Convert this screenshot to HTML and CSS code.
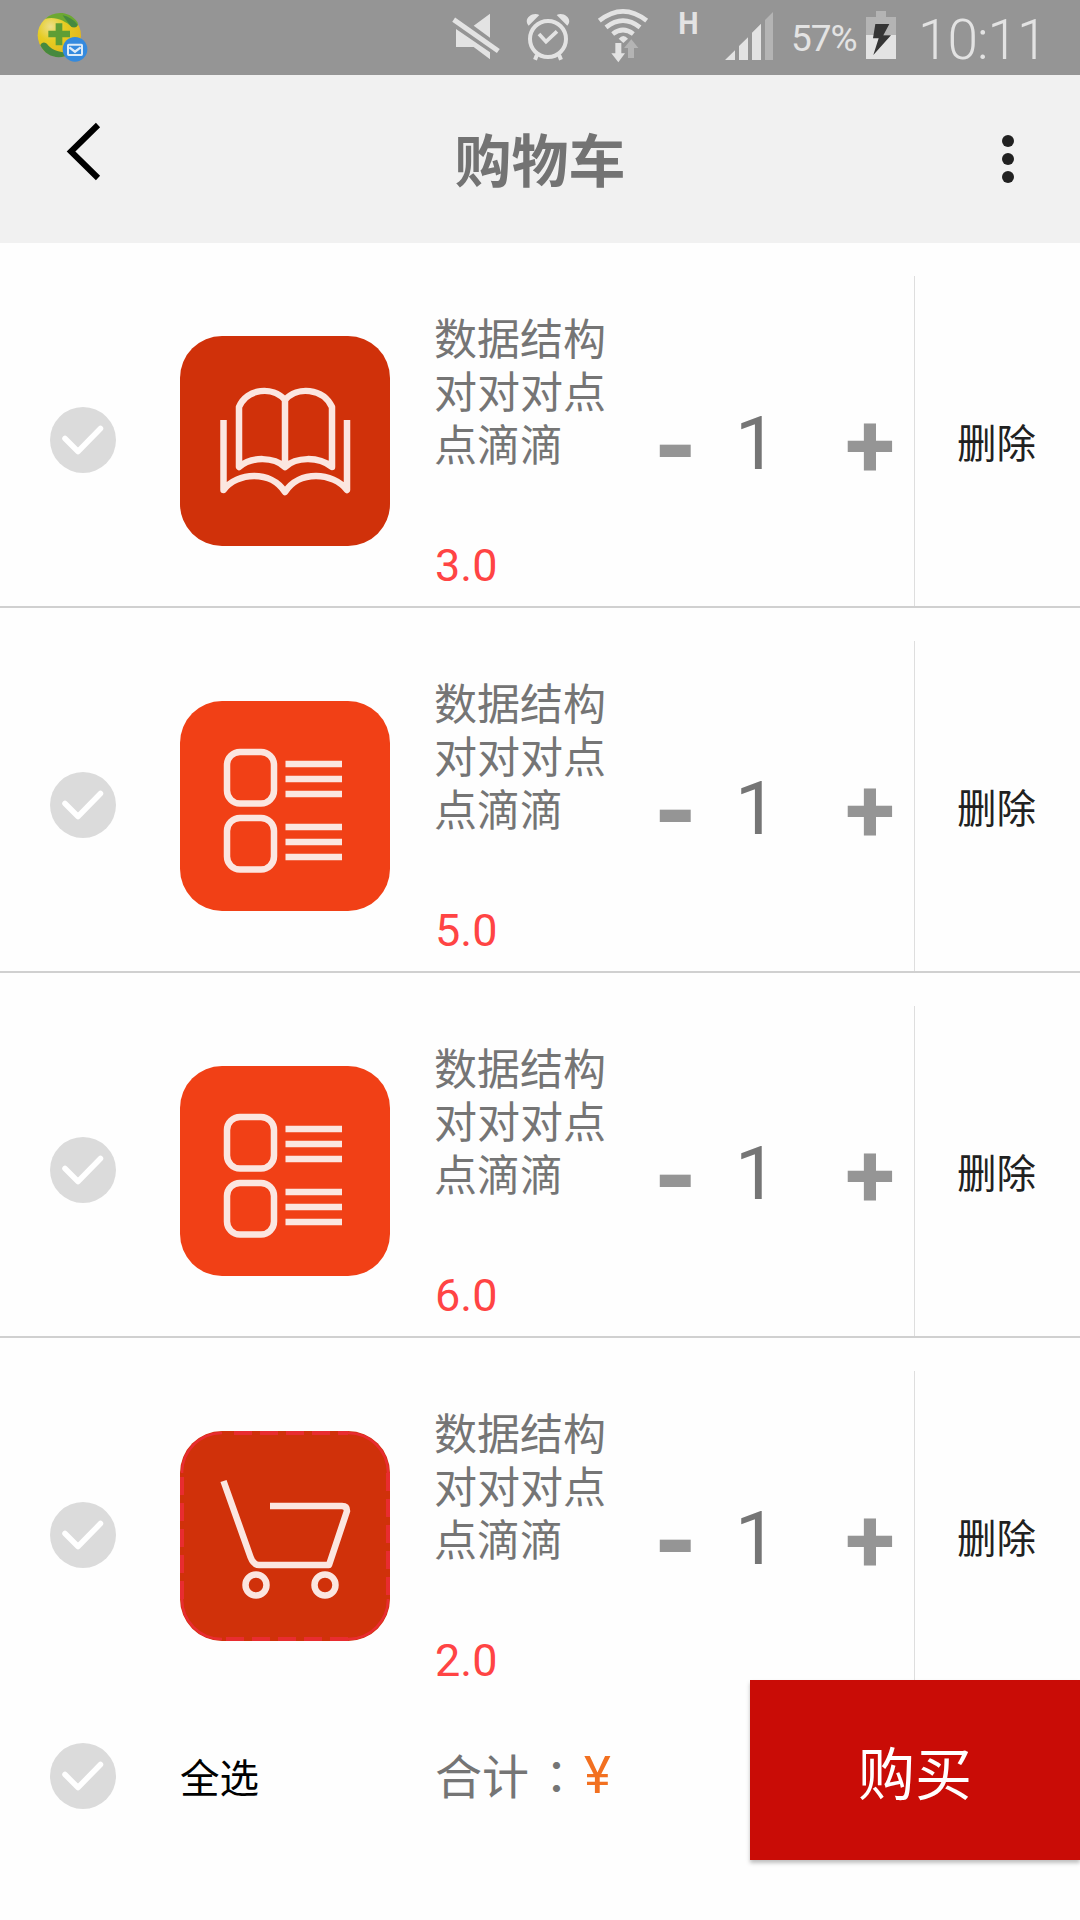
FILE: index.html
```html
<!DOCTYPE html>
<html lang="zh-CN">
<head>
<meta charset="UTF-8">
<meta name="viewport" content="width=device-width, initial-scale=1.0">
<title>购物车</title>
<link rel="stylesheet" href="styles.css">
</head>

<body>
    <svg class="defs">
        <defs>
            <symbol id="check" viewBox="0 0 68 68">
                <circle cx="34" cy="34" r="33" fill="#dbdbdb"/>
                <path d="M16 32.500 L29 45.500 L51.500 22.500" fill="none" stroke="#fff" stroke-width="5.500" stroke-linecap="round" stroke-linejoin="round"/>
            </symbol>
            <symbol id="book" viewBox="0 0 210 210">
                <rect width="210" height="210" rx="42" fill="#d0310a"/>
                <g class="line">
                    <path d="M43.500 84 V154 C57 136 91 134 105 156 C119 134 153 136 167 154 V84"/>
                    <path d="M59 131 V71 C67 52 93 50 105 64 C117 50 143 52 152 71 V131 C138 120 116 121 105 131 C94 121 72 120 59 131 Z M105 64 V131"/>
                </g>
            </symbol>
            <symbol id="list" viewBox="0 0 210 210">
                <rect width="210" height="210" rx="42" fill="#f14016"/>
                <g class="line">
                    <rect x="47" y="51" width="47" height="51.500" rx="13"/>
                    <rect x="47" y="117" width="47" height="51.500" rx="13"/>
                    <path d="M105.500 63 H162 M105.500 78 H162 M105.500 93 H162 M105.500 126 H162 M105.500 141 H162 M105.500 156 H162"/>
                </g>
            </symbol>
            <symbol id="cart" viewBox="0 0 210 210">
                <rect width="210" height="210" rx="42" fill="#d0310a"/>
                <path d="M54 2 H168 M208 42 V168 M168 208 H42 M2 168 V42" fill="none" stroke="#e82c30" stroke-width="4" stroke-dasharray="18 8"/>
                <path d="M2 42 A40 40 0 0 1 42 2 M168 2 A40 40 0 0 1 208 42 M208 168 A40 40 0 0 1 168 208 M42 208 A40 40 0 0 1 2 168" fill="none" stroke="#e82c30" stroke-width="2.500"/>
                <g class="line">
                    <path d="M43.500 50 L70.500 126 Q73.500 134 79 134 H149 L167 80 Q167 75 162 75 H90"/>
                    <circle cx="76" cy="154" r="10.500"/>
                    <circle cx="145" cy="154" r="10.500"/>
                </g>
            </symbol>
        </defs>
    </svg>

    <div class="status">
        <svg class="app-icon" viewBox="108 0 156 225">
            <defs>
                <radialGradient id="ball" cx="0.3" cy="0.3" r="0.8">
                    <stop offset="0" stop-color="#eddf8a"/>
                    <stop offset="0.4" stop-color="#e6cc22"/>
                    <stop offset="1" stop-color="#e2b41c"/>
                </radialGradient>
            </defs>
            <circle cx="178" cy="106" r="65" fill="url(#ball)"/>
            <path d="M136 56 C160 34 206 30 232 66 C238 78 226 86 214 80 C196 62 166 48 136 56 Z" fill="#6ca832"/>
            <path d="M188 46 C206 50 222 60 233 74 C230 84 220 82 214 80 C206 70 196 58 188 46 Z" fill="#46893f"/>
            <path d="M121 136 C126 124 138 126 144 136 C158 152 182 158 214 160 C180 182 138 172 121 136 Z" fill="#46893f"/>
            <path d="M167 70 H187 V92 H210 V112 H187 V136 H167 V112 H145 V92 H167 Z" fill="#5e9e35"/>
            <circle cx="225" cy="148" r="37" fill="#348ade"/>
            <rect x="204" y="134" width="42" height="31" rx="2" fill="none" stroke="#dcebf7" stroke-width="6"/>
            <path d="M208 142 L225 155 L242 142" fill="none" stroke="#dcebf7" stroke-width="7"/>
        </svg>
        <svg class="mute" viewBox="36 0 144 225">
            <path d="M150 41 V113 L101 77 Z M48 87 L150 157 V178 L101 141 H48 Z" fill="#e3e3e3"/>
            <path d="M41 59 L175 153" stroke="#e3e3e3" stroke-width="15"/>
        </svg>
        <svg class="alarm" viewBox="255 0 138 225">
            <circle cx="324" cy="117" r="54" fill="none" stroke="#e3e3e3" stroke-width="12"/>
            <path d="M297 102 L318 125 L351 94" fill="none" stroke="#e3e3e3" stroke-width="11"/>
            <path d="M266 77 C248 58 276 34 298 45 Z M382 77 C400 58 372 34 350 45 Z" fill="#e3e3e3"/>
            <path d="M291 164 L285 179 M357 164 L363 179" stroke="#e3e3e3" stroke-width="12"/>
        </svg>
        <svg class="wifi" viewBox="471 0 156 225">
            <g fill="none" stroke="#e3e3e3" stroke-width="14">
                <path d="M478 62 Q549 6 620 62"/>
                <path d="M498 82 Q549 42 600 82"/>
                <path d="M518 102 Q549 78 580 102"/>
            </g>
            <path d="M536 116 Q550 100 564 116 L550 129 Z" fill="#e3e3e3"/>
            <path d="M526 129 H544 V160 H555 L535 187 L514 160 H526 Z" fill="#e3e3e3"/>
            <path d="M564 174 V144 H552 L574 118 L595 144 H582 V174 Z" fill="#b4b4b4"/>
        </svg>
        <span class="network">H</span>
        <svg class="signal" viewBox="855 0 144 225">
            <path d="M855 180 L885 151 V180 Z M897 180 V138 L924 112 V180 Z M936 180 V98 L963 71 V180 Z" fill="#e3e3e3"/>
            <path d="M975 180 V60 L999 36 V180 Z" fill="#b4b4b4"/>
        </svg>
        <span class="percent">57%</span>
        <svg class="battery" viewBox="318 0 90 225">
            <path d="M318 51 H348 V33 H378 V51 H408 V177 H318 Z" fill="#b4b4b4"/>
            <path d="M318 105 H408 V177 H318 Z" fill="#e3e3e3"/>
            <path d="M346 72 H388 L370 106 H393 L340 165 L356 115 H339 Z" fill="#353535"/>
        </svg>
        <span class="time">10:11</span>
    </div>

    <div class="header">
        <svg class="back" viewBox="0 0 36 62">
            <path d="M32 4 L5 30.500 L32 57" fill="none" stroke="#000" stroke-width="6"/>
        </svg>
        <h1>购物车</h1>
        <svg class="more" viewBox="0 0 12 48">
            <circle cx="6" cy="6" r="6"/>
            <circle cx="6" cy="24" r="6"/>
            <circle cx="6" cy="42" r="6"/>
        </svg>
    </div>

    <div class="list">
        <div class="item">
            <svg class="check"><use href="#check"/></svg>
            <svg class="pic"><use href="#book"/></svg>
            <div class="info">
                <p class="name">数据结构对对对点点滴滴</p>
                <p class="price">3.0</p>
            </div>
            <span class="minus">-</span>
            <span class="num">1</span>
            <span class="plus">+</span>
            <span class="delete">删除</span>
        </div>
        <div class="item">
            <svg class="check"><use href="#check"/></svg>
            <svg class="pic"><use href="#list"/></svg>
            <div class="info">
                <p class="name">数据结构对对对点点滴滴</p>
                <p class="price">5.0</p>
            </div>
            <span class="minus">-</span>
            <span class="num">1</span>
            <span class="plus">+</span>
            <span class="delete">删除</span>
        </div>
        <div class="item">
            <svg class="check"><use href="#check"/></svg>
            <svg class="pic"><use href="#list"/></svg>
            <div class="info">
                <p class="name">数据结构对对对点点滴滴</p>
                <p class="price">6.0</p>
            </div>
            <span class="minus">-</span>
            <span class="num">1</span>
            <span class="plus">+</span>
            <span class="delete">删除</span>
        </div>
        <div class="item">
            <svg class="check"><use href="#check"/></svg>
            <svg class="pic"><use href="#cart"/></svg>
            <div class="info">
                <p class="name">数据结构对对对点点滴滴</p>
                <p class="price">2.0</p>
            </div>
            <span class="minus">-</span>
            <span class="num">1</span>
            <span class="plus">+</span>
            <span class="delete">删除</span>
        </div>
    </div>

    <div class="footer">
        <svg class="check"><use href="#check"/></svg>
        <span class="all">全选</span>
        <span class="total">合计<span class="colon" lang="zh-TW">：</span></span>
        <span class="yen">¥</span>
        <div class="buy">购买</div>
    </div>
</body>
</html>
```

FILE: styles.css
```css
* {
    box-sizing: border-box;
}
body {
    margin: 0;
    width: 1080px;
    height: 1920px;
    overflow: hidden;
    background-color: #fefefe;
    font-family: Roboto, "Noto Sans CJK SC", sans-serif;
    color: #757575;
}
h1, p {
    margin: 0;
}
svg {
    display: block;
    flex: none;
}
.defs {
    display: none;
}
.line {
    fill: none;
    stroke: #fbe6e0;
    stroke-width: 6.5;
    stroke-linejoin: round;
}

/* status bar */
.status {
    display: flex;
    height: 75px;
    padding-left: 36px;
    background-color: #959595;
    color: #e3e3e3;
    line-height: 75px;
}
.status svg {
    height: 75px;
}
.app-icon {
    width: 52px;
}
.mute {
    width: 48px;
    margin-left: 364px;
}
.alarm {
    width: 46px;
    margin-left: 25px;
}
.wifi {
    width: 52px;
    margin-left: 26px;
}
.network {
    width: 24px;
    margin-left: 28px;
    font-size: 32px;
    font-weight: bold;
    line-height: 46px;
    transform: scaleX(0.9);
}
.signal {
    width: 48px;
    margin-left: 24px;
}
.percent {
    width: 75px;
    margin-left: 18px;
    padding-top: 1px;
    font-size: 37px;
    letter-spacing: -1px;
}
.battery {
    width: 30px;
}
.time {
    margin-left: 22px;
    padding-top: 3px;
    font-size: 55px;
    font-weight: 300;
    letter-spacing: -1px;
}

/* title bar */
.header {
    display: flex;
    justify-content: space-between;
    height: 168px;
    padding: 0 66px;
    background-color: #f1f1f1;
}
.header h1 {
    font-size: 57px;
    font-weight: bold;
    line-height: 175px;
    color: #737373;
}
.back {
    width: 36px;
    height: 62px;
    margin-top: 46px;
}
.more {
    width: 12px;
    height: 48px;
    margin-top: 60px;
    margin-left: 24px;
    fill: #212121;
}

/* cart items */
.item {
    display: flex;
    height: 365px;
    border-bottom: 2px solid #d0d0d0;
}
/* the last one runs into the bottom bar */
.item:last-child {
    height: 342px;
    border-bottom: none;
}
.check {
    width: 68px;
    height: 68px;
    margin: 163px 0 0 49px;
}
.pic {
    width: 210px;
    height: 210px;
    margin: 93px 0 0 63px;
}
.info {
    width: 173px;
    margin: 71px 18px 0 44px;
}
.name {
    font-size: 43px;
    line-height: 53px;
}
.price {
    margin-top: 66px;
    padding-left: 1px;
    font-size: 45px;
    line-height: 53px;
    color: #ff4444;
}
.minus, .plus, .num {
    height: 342px;
    text-align: center;
}
.minus, .plus {
    font-weight: bold;
    color: #959595;
}
.minus {
    width: 101px;
    font-size: 112px;
    line-height: 407px;
}
.num {
    width: 60px;
    font-size: 75px;
    line-height: 401px;
}
.plus {
    width: 88px;
    margin-left: 40px;
    font-size: 91px;
    line-height: 407px;
}
.delete {
    width: 166px;
    height: 330px;
    margin-top: 33px;
    padding-left: 42px;
    border-left: 1px solid #dedede;
    font-size: 39.5px;
    line-height: 338px;
    color: #212121;
}
.item:last-child .delete {
    height: 309px;
}

/* bottom bar */
.footer {
    display: flex;
    height: 180px;
    line-height: 180px;
}
.footer .check {
    margin-top: 62px;
}
.all {
    width: 192px;
    margin-left: 63px;
    padding-top: 10px;
    font-size: 39.5px;
    color: #000;
}
.total {
    width: 148px;
    margin-left: 63px;
    padding-top: 4px;
    font-size: 47px;
}
.colon {
    margin-left: 4px;
    font-family: "Noto Sans CJK TC", sans-serif;
}
.yen {
    width: 167px;
    padding-top: 6px;
    padding-left: 1px;
    font-size: 51px;
    color: #f27020;
}
.buy {
    width: 330px;
    height: 180px;
    padding-top: 9px;
    background-color: #c90c06;
    box-shadow: 0 3px 4px rgba(0, 0, 0, 0.25);
    line-height: 174px;
    text-align: center;
    font-size: 57px;
    color: #fff;
}
```
